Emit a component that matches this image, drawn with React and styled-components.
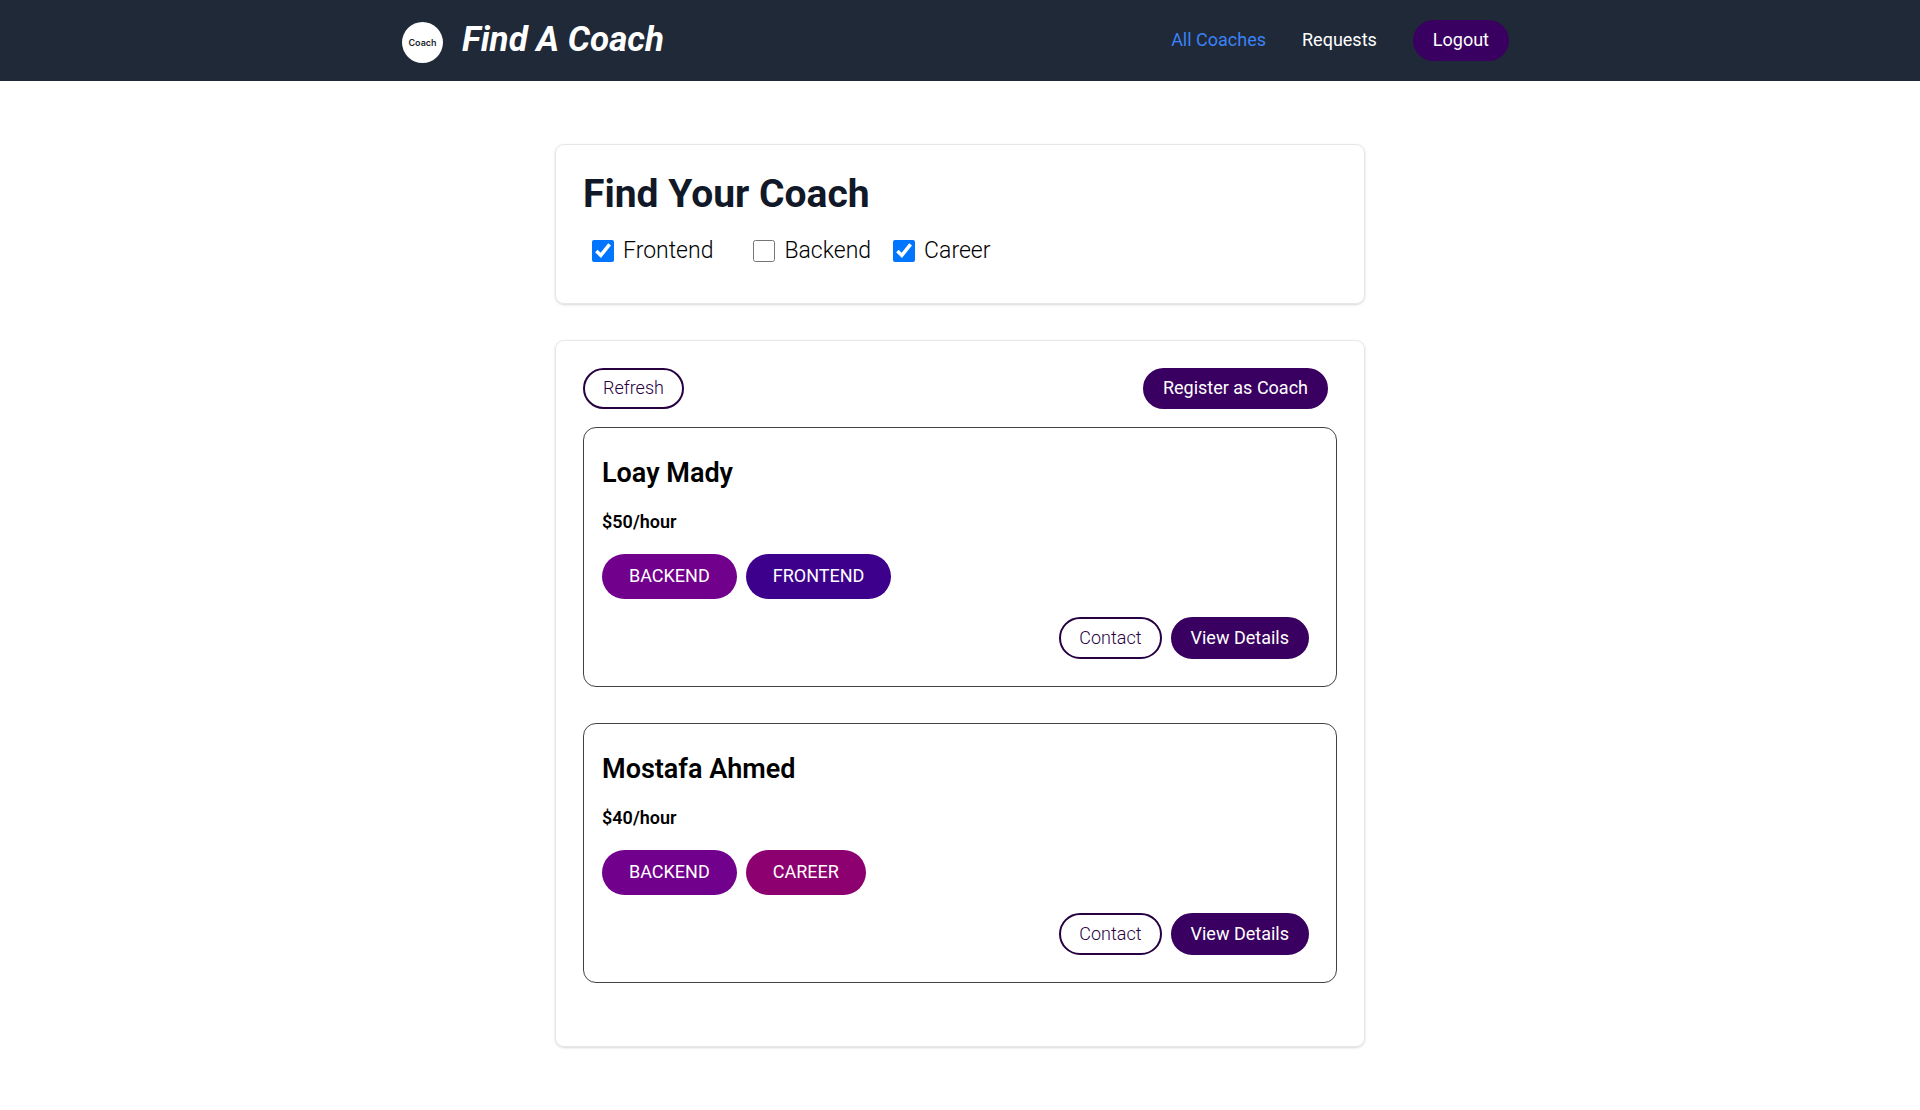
import { useState } from "react";
import styled, { createGlobalStyle, css } from "styled-components";

const AREAS = [
  { id: "frontend", label: "Frontend" },
  { id: "backend", label: "Backend" },
  { id: "career", label: "Career" },
];

const BADGE_COLORS = {
  frontend: "#3d008d",
  backend: "#71008d",
  career: "#8d0070",
};

const COACHES = [
  { id: "c1", name: "Loay Mady", rate: 50, areas: ["backend", "frontend"] },
  { id: "c2", name: "Mostafa Ahmed", rate: 40, areas: ["backend", "career"] },
];

const GlobalStyle = createGlobalStyle`
  * {
    box-sizing: border-box;
    margin: 0;
    padding: 0;
  }

  body {
    font-family: Roboto, "Liberation Sans", sans-serif;
    font-size: 18px;
    line-height: 27px;
    color: #000;
    background-color: #fff;
  }
`;

const flexAlignCenter = css`
  display: flex;
  align-items: center;
`;

const HeaderBar = styled.header`
  background-color: #1f2937;
`;

const HeaderInner = styled.div`
  ${flexAlignCenter};
  justify-content: space-between;
  max-width: 1152px;
  min-height: 81px;
  margin: 0 auto;
  padding: 0 27px 0 18px;
`;

const Brand = styled.a`
  ${flexAlignCenter};
  gap: 19px;
  padding-bottom: 2px;
  color: #fff;
  text-decoration: none;
`;

const Logo = styled.span`
  ${flexAlignCenter};
  justify-content: center;
  width: 41px;
  height: 41px;
  margin-top: 5px;
  border-radius: 50%;
  background-color: #fff;
  color: #1f1f2b;
  font-family: Inter, sans-serif;
  font-size: 9px;
  font-weight: 600;
`;

const BrandName = styled.span`
  font-size: 35px;
  font-style: italic;
  font-weight: 700;
  line-height: 40px;
`;

const Nav = styled.nav`
  ${flexAlignCenter};
  gap: 36px;
`;

const NavLink = styled.a`
  padding-bottom: 2px;
  color: ${({ $active }) => ($active ? "#3b82f6" : "#fff")};
  text-decoration: none;
`;

const Button = styled.button`
  min-height: 41px;
  padding: 0 18px 2px;
  border: 2px solid #3a0061;
  border-radius: 30px;
  background-color: #3a0061;
  color: #fff;
  font: inherit;
  cursor: pointer;

  ${({ $outline }) =>
    $outline &&
    css`
      border-color: #270041;
      background-color: transparent;
      color: #270041;
      font-weight: 300;
    `}
`;

const Main = styled.main`
  display: flex;
  flex-direction: column;
  gap: 36px;
  max-width: 810px;
  margin: 63px auto;
`;

const Card = styled.section`
  padding: 27px;
  border: 1px solid #e5e7eb;
  border-radius: 9px;
  box-shadow: 0 1px 3px rgba(0, 0, 0, 0.1), 0 1px 2px rgba(0, 0, 0, 0.06);
`;

const Title = styled.h1`
  color: #111827;
  font-size: 39px;
  font-weight: 700;
  line-height: 45px;
`;

const Options = styled.div`
  ${flexAlignCenter};
  flex-wrap: wrap;
  gap: 22px;
  padding: 20px 9px 12px;
`;

const Option = styled.label`
  ${flexAlignCenter};
  gap: 9px;
  font-size: 23px;
  font-weight: 300;

  &:first-child {
    margin-right: 18px;
  }

  & > input {
    width: 22px;
    height: 22px;
  }
`;

const Controls = styled.div`
  display: flex;
  justify-content: space-between;
  padding-right: 9px;
`;

const CoachList = styled.ul`
  display: flex;
  flex-direction: column;
  gap: 36px;
  margin: 18px 0 36px;
  list-style: none;
`;

const CoachCard = styled.li`
  padding: 27px 18px;
  border: 1px solid #424242;
  border-radius: 13px;
`;

const Name = styled.h2`
  font-size: 27px;
  font-weight: 600;
  line-height: 36px;
`;

const Rate = styled.h3`
  margin: 17px 0 19px;
  font-size: 18px;
  font-weight: 600;
  line-height: 27px;
`;

const Badges = styled.div`
  display: flex;
  gap: 9px;
`;

const Badge = styled.span`
  padding: 8px 27px 10px;
  border-radius: 30px;
  background-color: ${({ $area }) => BADGE_COLORS[$area]};
  color: #fff;
  text-transform: uppercase;
`;

const Actions = styled.div`
  display: flex;
  justify-content: flex-end;
  gap: 9px;
  min-height: 42px;
  margin-top: 18px;
  padding-right: 9px;
`;

const TheHeader = () => {
  return (
    <HeaderBar>
      <HeaderInner>
        <Brand href="#">
          <Logo>Coach</Logo>
          <BrandName>Find A Coach</BrandName>
        </Brand>
        <Nav>
          <NavLink href="#coaches" $active>
            All Coaches
          </NavLink>
          <NavLink href="#requests">Requests</NavLink>
          <Button type="button">Logout</Button>
        </Nav>
      </HeaderInner>
    </HeaderBar>
  );
};

const CoachFilter = ({ filters, onChange }) => {
  return (
    <Card>
      <Title>Find Your Coach</Title>
      <Options>
        {AREAS.map(({ id, label }) => (
          <Option key={id} htmlFor={id}>
            <input
              id={id}
              type="checkbox"
              checked={filters[id]}
              onChange={() => onChange(id)}
            />
            {label}
          </Option>
        ))}
      </Options>
    </Card>
  );
};

const CoachItem = ({ name, rate, areas }) => {
  return (
    <CoachCard>
      <Name>{name}</Name>
      <Rate>${rate}/hour</Rate>
      <Badges>
        {areas.map((area) => (
          <Badge key={area} $area={area}>
            {area}
          </Badge>
        ))}
      </Badges>
      <Actions>
        <Button type="button" $outline>
          Contact
        </Button>
        <Button type="button">View Details</Button>
      </Actions>
    </CoachCard>
  );
};

const App = () => {
  const [filters, setFilters] = useState({
    frontend: true,
    backend: false,
    career: true,
  });

  const onChange = (id) => setFilters({ ...filters, [id]: !filters[id] });

  const coaches = COACHES.filter((coach) =>
    coach.areas.some((area) => filters[area])
  );

  return (
    <>
      <GlobalStyle />
      <TheHeader />
      <Main>
        <CoachFilter filters={filters} onChange={onChange} />
        <Card>
          <Controls>
            <Button type="button" $outline>
              Refresh
            </Button>
            <Button type="button">Register as Coach</Button>
          </Controls>
          <CoachList>
            {coaches.map((coach) => (
              <CoachItem key={coach.id} {...coach} />
            ))}
          </CoachList>
        </Card>
      </Main>
    </>
  );
};
export default App;
